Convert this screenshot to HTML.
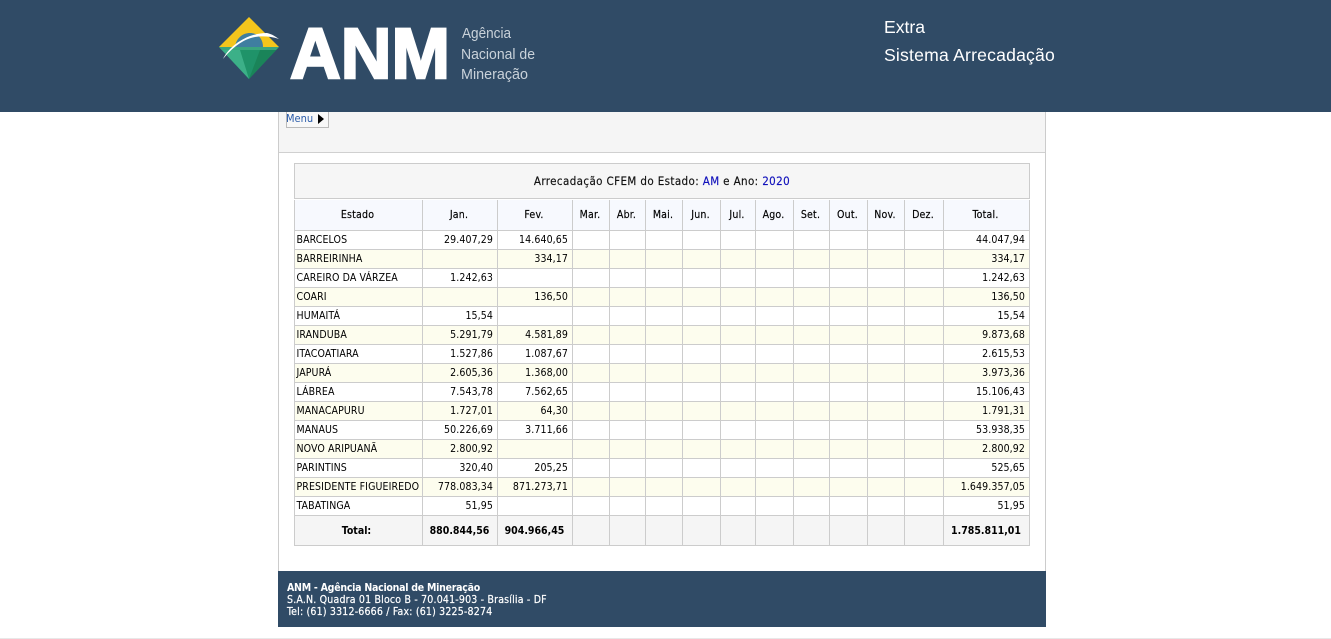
<!DOCTYPE html>
<html lang="pt-BR"><head><meta charset="utf-8"><title>Arrecadação CFEM</title>
<style>
html,body{margin:0;padding:0;background:#fff;width:1331px;height:639px;overflow:hidden}
body{position:relative;font-family:"DejaVu Sans Condensed","DejaVu Sans","Liberation Sans",sans-serif;font-size:10px;color:#111}
.abs{position:absolute}
#hdr{left:0;top:0;width:1331px;height:112px;background:#304b66}
#hdr .t{position:absolute;left:884px;color:#fff;font:17.6px "Liberation Sans",sans-serif;white-space:nowrap}
#wrap{left:278px;top:112px;width:766px;height:459px;border-left:1px solid #ccc;border-right:1px solid #ccc;background:#fff}
#band{left:279px;top:112px;width:766px;height:40px;background:#f5f5f5;border-bottom:1px solid #d0d0d0}
#menu{left:286px;top:112px;width:41px;height:15px;border:1px solid #bbb;border-top:none;background:#f8f8f8;color:#2a5caa;font-size:11px;line-height:14px;white-space:nowrap;text-indent:-1px}
#menu i{position:absolute;left:31px;top:2px;width:0;height:0;border-left:6px solid #000;border-top:5px solid transparent;border-bottom:5px solid transparent}
#title{left:294px;top:163px;width:734px;height:34px;border:1px solid #ccc;background:#f6f6f6;text-align:center;font-size:11.5px;line-height:35px;letter-spacing:.38px;color:#111;-webkit-text-stroke:.15px #111}
#title b{font-weight:normal;color:#1111bb;-webkit-text-stroke:.15px #1111bb}
table{position:absolute;left:294px;top:200px;border-collapse:separate;border-spacing:0;table-layout:fixed;width:736px;font-size:10.5px;letter-spacing:.1px;color:#000}
td,th{box-sizing:border-box;border-right:1px solid #ccc;border-bottom:1px solid #ccc;padding:0;height:19px;overflow:hidden;white-space:nowrap;font-weight:normal}
td:first-child,th:first-child{border-left:1px solid #ccc;text-align:left;padding-left:1.5px}
td{text-align:right;padding-right:4px}
tr.h th{height:31px;background:#f7f9fe;text-align:center!important;padding:0 2px 0 0;font-size:10.5px;letter-spacing:.2px;color:#000;-webkit-text-stroke:.15px #000}
tr.o td{background:#fdfdee}
tr.s td{height:30px;background:#f5f5f5;font-weight:bold;font-size:10.5px;letter-spacing:0;text-align:center!important;padding:0 1px 0 0}
tr.s td:first-child{padding-left:0;text-indent:-3px}
#foot{left:278px;top:571px;width:768px;height:56px;background:#304b66;color:#fff;font-size:10.5px;line-height:12px;letter-spacing:.19px;-webkit-text-stroke:.2px #fff}
#foot div{position:absolute;left:9px;top:10px;padding-top:1px;white-space:nowrap}
#foot b{font-weight:bold;letter-spacing:-.25px;-webkit-text-stroke:0}
#bot{left:0;top:638px;width:1331px;height:1px;background:#e8e8e8}
</style></head><body>
<div id="hdr" class="abs">
<svg class="abs" style="left:0;top:0" width="600" height="112" viewBox="0 0 600 112">
<polygon points="249,17 279,47 219,47" fill="#f4c51c"/>
<polygon points="219,47 279,47 249,79" fill="#1f9369"/>
<polygon points="219,47 240,50 249,79" fill="#3cb088"/>
<polygon points="260,50 279,47 249,79" fill="#1a8459"/>
<polygon points="219,47 279,47 276,50 222,50" fill="#3aa57e"/>
<path d="M235,47 C236,38 243,33 250,33 C258,33 263,39 263,47Z" fill="#3f7ea0"/>
<path d="M223,59 C230,45 248,33 267,33 C272,34 276,37 279,39 C270,36 262,36 255,37 C243,39 232,48 223,59Z" fill="#fff"/>
<text x="290" y="78" font-family="Liberation Sans" font-weight="bold" font-size="71" fill="#fff" stroke="#fff" stroke-width="2.4" textLength="160" lengthAdjust="spacingAndGlyphs">ANM</text>
<g font-family="Liberation Sans" font-size="14.5" fill="#c9d2da">
<text x="462" y="38" textLength="49" lengthAdjust="spacingAndGlyphs">Agência</text>
<text x="461" y="59" textLength="74" lengthAdjust="spacingAndGlyphs">Nacional de</text>
<text x="461" y="79" textLength="67" lengthAdjust="spacingAndGlyphs">Mineração</text>
</g></svg>
<div class="t" style="top:17px">Extra</div>
<div class="t" style="top:45px;letter-spacing:.2px">Sistema Arrecadação</div>
</div>
<div id="wrap" class="abs"></div>
<div id="band" class="abs"></div>
<div id="menu" class="abs">Menu<i></i></div>
<div id="title" class="abs">Arrecadação CFEM do Estado: <b>AM</b> e Ano: <b>2020</b></div>
<table>
<colgroup><col style="width:129px"><col style="width:75px"><col style="width:75px"><col style="width:37px"><col style="width:36px"><col style="width:37px"><col style="width:38px"><col style="width:35px"><col style="width:38px"><col style="width:36px"><col style="width:38px"><col style="width:37px"><col style="width:39px"><col style="width:86px"></colgroup>
<tr class="h"><th>Estado</th><th>Jan.</th><th>Fev.</th><th>Mar.</th><th>Abr.</th><th>Mai.</th><th>Jun.</th><th>Jul.</th><th>Ago.</th><th>Set.</th><th>Out.</th><th>Nov.</th><th>Dez.</th><th>Total.</th></tr>
<tr><td>BARCELOS</td><td>29.407,29</td><td>14.640,65</td><td></td><td></td><td></td><td></td><td></td><td></td><td></td><td></td><td></td><td></td><td>44.047,94</td></tr>
<tr class="o"><td>BARREIRINHA</td><td></td><td>334,17</td><td></td><td></td><td></td><td></td><td></td><td></td><td></td><td></td><td></td><td></td><td>334,17</td></tr>
<tr><td>CAREIRO DA VÁRZEA</td><td>1.242,63</td><td></td><td></td><td></td><td></td><td></td><td></td><td></td><td></td><td></td><td></td><td></td><td>1.242,63</td></tr>
<tr class="o"><td>COARI</td><td></td><td>136,50</td><td></td><td></td><td></td><td></td><td></td><td></td><td></td><td></td><td></td><td></td><td>136,50</td></tr>
<tr><td>HUMAITÁ</td><td>15,54</td><td></td><td></td><td></td><td></td><td></td><td></td><td></td><td></td><td></td><td></td><td></td><td>15,54</td></tr>
<tr class="o"><td>IRANDUBA</td><td>5.291,79</td><td>4.581,89</td><td></td><td></td><td></td><td></td><td></td><td></td><td></td><td></td><td></td><td></td><td>9.873,68</td></tr>
<tr><td>ITACOATIARA</td><td>1.527,86</td><td>1.087,67</td><td></td><td></td><td></td><td></td><td></td><td></td><td></td><td></td><td></td><td></td><td>2.615,53</td></tr>
<tr class="o"><td>JAPURÁ</td><td>2.605,36</td><td>1.368,00</td><td></td><td></td><td></td><td></td><td></td><td></td><td></td><td></td><td></td><td></td><td>3.973,36</td></tr>
<tr><td>LÁBREA</td><td>7.543,78</td><td>7.562,65</td><td></td><td></td><td></td><td></td><td></td><td></td><td></td><td></td><td></td><td></td><td>15.106,43</td></tr>
<tr class="o"><td>MANACAPURU</td><td>1.727,01</td><td>64,30</td><td></td><td></td><td></td><td></td><td></td><td></td><td></td><td></td><td></td><td></td><td>1.791,31</td></tr>
<tr><td>MANAUS</td><td>50.226,69</td><td>3.711,66</td><td></td><td></td><td></td><td></td><td></td><td></td><td></td><td></td><td></td><td></td><td>53.938,35</td></tr>
<tr class="o"><td>NOVO ARIPUANÃ</td><td>2.800,92</td><td></td><td></td><td></td><td></td><td></td><td></td><td></td><td></td><td></td><td></td><td></td><td>2.800,92</td></tr>
<tr><td>PARINTINS</td><td>320,40</td><td>205,25</td><td></td><td></td><td></td><td></td><td></td><td></td><td></td><td></td><td></td><td></td><td>525,65</td></tr>
<tr class="o"><td>PRESIDENTE FIGUEIREDO</td><td>778.083,34</td><td>871.273,71</td><td></td><td></td><td></td><td></td><td></td><td></td><td></td><td></td><td></td><td></td><td>1.649.357,05</td></tr>
<tr><td>TABATINGA</td><td>51,95</td><td></td><td></td><td></td><td></td><td></td><td></td><td></td><td></td><td></td><td></td><td></td><td>51,95</td></tr>
<tr class="s"><td>Total:</td><td>880.844,56</td><td>904.966,45</td><td></td><td></td><td></td><td></td><td></td><td></td><td></td><td></td><td></td><td></td><td>1.785.811,01</td></tr>
</table>
<div id="foot" class="abs"><div><b>ANM - Agência Nacional de Mineração</b><br>S.A.N. Quadra 01 Bloco B - 70.041-903 - Brasília - DF<br>Tel: (61) 3312-6666 / Fax: (61) 3225-8274</div></div>
<div id="bot" class="abs"></div>
</body></html>
